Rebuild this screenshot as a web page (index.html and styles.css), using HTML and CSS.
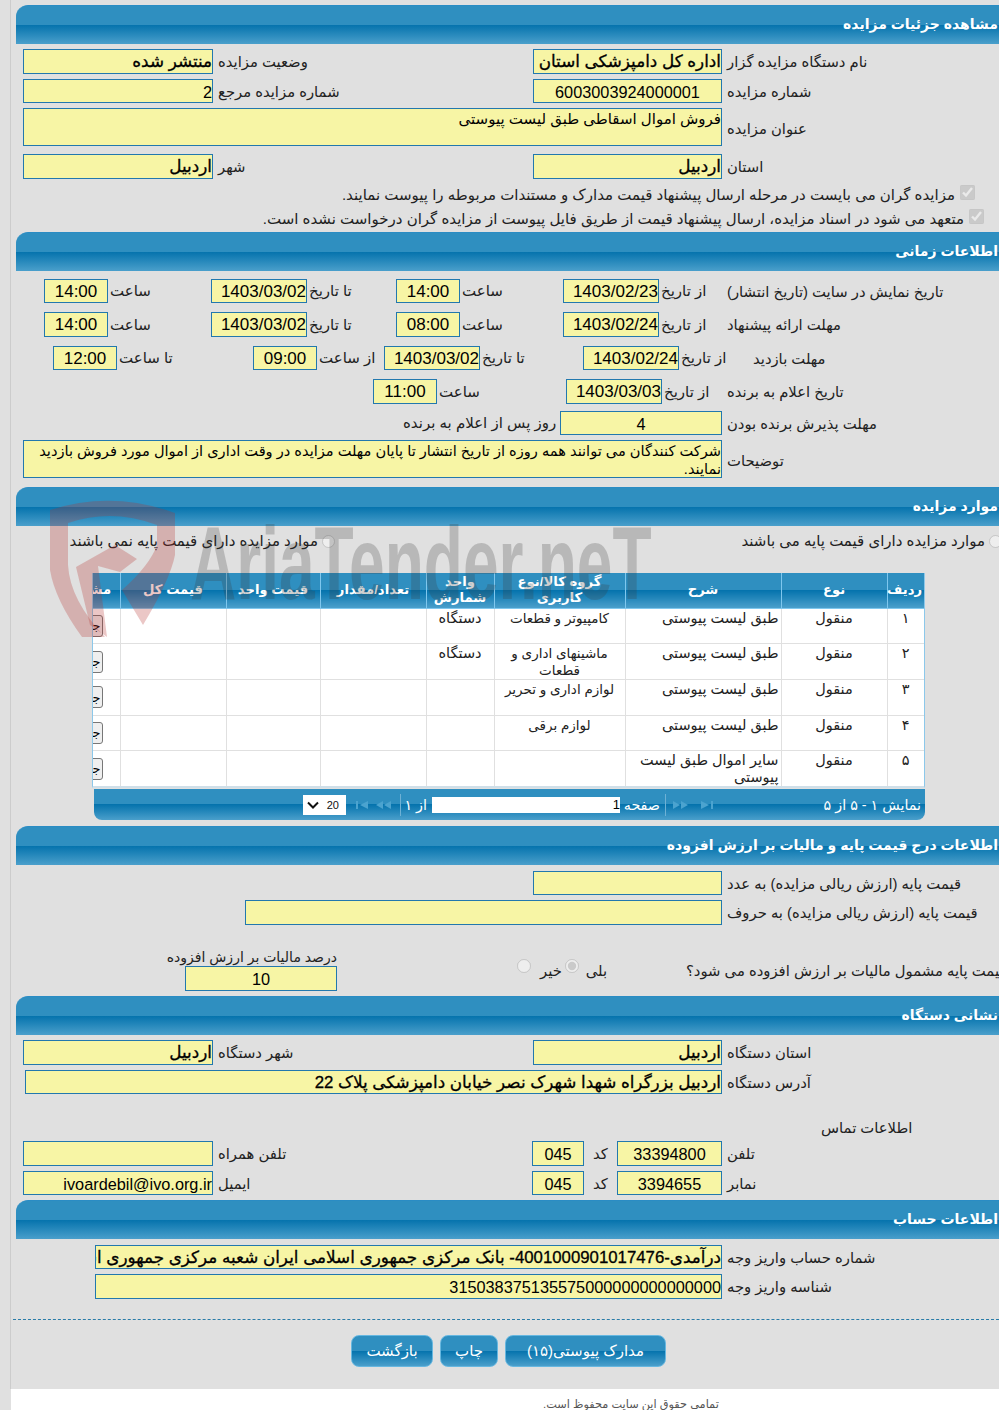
FILE: index.html
```html
<!DOCTYPE html>
<html lang="fa">
<head>
<meta charset="utf-8">
<title>مشاهده جزئیات مزایده</title>
<link rel="stylesheet" href="styles.css">
</head>
<body>
<div class="page">
  <section class="sec">
    <h2 class="head"><span>مشاهده جزئیات مزایده</span></h2>
    <div class="form f1">
      <div class="row h25">
        <div class="in w190 m7 bold">منتشر شده</div><label class="lb w315">وضعیت مزایده</label>
        <div class="in w189 bold">اداره کل دامپزشکی استان</div><label class="lb">نام دستگاه مزایده گزار</label>
      </div>
      <div class="row h24 gap5">
        <div class="in w190 m7">2</div><label class="lb w315">شماره مزایده مرجع</label>
        <div class="in w189 center">6003003924000001</div><label class="lb">شماره مزایده</label>
      </div>
      <div class="row h38 gap5">
        <div class="in w699 m7 top">فروش اموال اسقاطی طبق لیست پیوستی</div><label class="lb">عنوان مزایده</label>
      </div>
      <div class="row h25 gap8">
        <div class="in w190 m7 bold">اردبیل</div><label class="lb w315">شهر</label>
        <div class="in w189 bold">اردبیل</div><label class="lb">استان</label>
      </div>
      <label class="check c1"><input type="checkbox" checked disabled>مزایده گران می بایست در مرحله ارسال پیشنهاد قیمت مدارک و مستندات مربوطه را پیوست نمایند.</label>
      <label class="check c2"><input type="checkbox" checked disabled>متعهد می شود در اسناد مزایده، ارسال پیشنهاد قیمت از طریق فایل پیوست از مزایده گران درخواست نشده است.</label>
    </div>
  </section>

  <section class="sec">
    <h2 class="head"><span>اطلاعات زمانی</span></h2>
    <div class="form f2">
      <div class="row tr t-a">
        <div class="in time">14:00</div><label class="tl">ساعت</label>
        <div class="in date">1403/03/02</div><label class="tl">تا تاریخ</label>
        <div class="in time">14:00</div><label class="tl">ساعت</label>
        <div class="in date">1403/02/23</div><label class="tl">از تاریخ</label>
        <label class="lb">تاریخ نمایش در سایت (تاریخ انتشار)</label>
      </div>
      <div class="row tr t-a h25">
        <div class="in time">14:00</div><label class="tl">ساعت</label>
        <div class="in date">1403/03/02</div><label class="tl">تا تاریخ</label>
        <div class="in time">08:00</div><label class="tl">ساعت</label>
        <div class="in date">1403/02/24</div><label class="tl">از تاریخ</label>
        <label class="lb">مهلت ارائه پیشنهاد</label>
      </div>
      <div class="row tr t-b">
        <div class="in time">12:00</div><label class="tl">تا ساعت</label>
        <div class="in time">09:00</div><label class="tl">از ساعت</label>
        <div class="in date">1403/03/02</div><label class="tl">تا تاریخ</label>
        <div class="in date">1403/02/24</div><label class="tl">از تاریخ</label>
        <label class="lb">مهلت بازدید</label>
      </div>
      <div class="row tr t-c h25">
        <div class="in time">11:00</div><label class="tl">ساعت</label>
        <div class="in date">1403/03/03</div><label class="tl">از تاریخ</label>
        <label class="lb">تاریخ اعلام به برنده</label>
      </div>
      <div class="row tr t-d">
        <label class="tl">روز پس از اعلام به برنده</label>
        <div class="in center">4</div>
        <label class="lb">مهلت پذیرش برنده بودن</label>
      </div>
      <div class="row h38 gap5">
        <div class="in w699 m7 top desc">شرکت کنندگان می توانند همه روزه از تاریخ انتشار تا پایان مهلت مزایده در وقت اداری از اموال مورد فروش بازدید نمایند.</div><label class="lb">توضیحات</label>
      </div>
    </div>
  </section>

  <section class="sec items">
    <h2 class="head"><span>موارد مزایده</span></h2>
    <div class="radios">
      <label class="rad"><input type="radio" disabled>موارد مزایده دارای قیمت پایه می باشند</label>
      <label class="rad r2"><input type="radio" disabled>موارد مزایده دارای قیمت پایه نمی باشند</label>
    </div>
    <div class="grid">
      <table>
        <colgroup>
          <col class="c-no"><col class="c-type"><col class="c-desc"><col class="c-group"><col class="c-unit"><col class="c-qty"><col class="c-price"><col class="c-total"><col class="c-act">
        </colgroup>
        <thead>
          <tr><th>ردیف</th><th>نوع</th><th>شرح</th><th>گروه کالا/نوع کاربری</th><th>واحد شمارش</th><th>تعداد/مقدار</th><th>قیمت واحد</th><th>قیمت کل</th><th>مشخصات</th></tr>
        </thead>
        <tbody>
          <tr><td>١</td><td>منقول</td><td class="r">طبق لیست پیوستی</td><td class="g">کامپیوتر و قطعات</td><td>دستگاه</td><td></td><td></td><td></td><td class="act"><button type="button" tabindex="-1">جزئیات</button></td></tr>
          <tr><td>٢</td><td>منقول</td><td class="r">طبق لیست پیوستی</td><td class="g">ماشینهای اداری و قطعات</td><td>دستگاه</td><td></td><td></td><td></td><td class="act"><button type="button" tabindex="-1">جزئیات</button></td></tr>
          <tr><td>٣</td><td>منقول</td><td class="r">طبق لیست پیوستی</td><td class="g">لوازم اداری و تحریر</td><td></td><td></td><td></td><td></td><td class="act"><button type="button" tabindex="-1">جزئیات</button></td></tr>
          <tr><td>۴</td><td>منقول</td><td class="r">طبق لیست پیوستی</td><td class="g">لوازم برقی</td><td></td><td></td><td></td><td></td><td class="act"><button type="button" tabindex="-1">جزئیات</button></td></tr>
          <tr><td>۵</td><td>منقول</td><td class="r">سایر اموال طبق لیست پیوستی</td><td class="g"></td><td></td><td></td><td></td><td></td><td class="act"><button type="button" tabindex="-1">جزئیات</button></td></tr>
        </tbody>
      </table>
    </div>
    <div class="pager">
      <span class="p-info">نمایش ١ - ۵ از ۵</span>
      <svg class="pi n1" viewBox="0 0 12 8"><path d="M0 0v8l8-4zM10 0h2v8h-2z"/></svg>
      <svg class="pi wide n2" viewBox="0 0 16 8"><path d="M0 0v8l7-4zM8 0v8l7-4z"/></svg>
      <i class="sep"></i>
      <span class="p-lbl">صفحه</span>
      <span class="p-input">1</span>
      <span class="p-of">از ١</span>
      <i class="sep"></i>
      <svg class="pi wide n3" viewBox="0 0 16 8"><path d="M8 0v8L1 4zM16 0v8L9 4z"/></svg>
      <svg class="pi n4" viewBox="0 0 12 8"><path d="M0 0h2v8H0zM12 0v8L4 4z"/></svg>
      <span class="p-size">20<svg viewBox="0 0 12 8"><path d="M1 1.500l5 5 5-5" fill="none" stroke="#111" stroke-width="2"/></svg></span>
    </div>
    <div class="mark" aria-hidden="true">
      <svg class="shield" viewBox="40 495 140 145"><path d="M50 510Q112 490 175 513V555Q170 580 143 625L122 590Q150 565 157 545V525Q112 508 68 523V565Q70 600 105 637H82Q55 600 50 570Z" fill="#b5302c" opacity=".27"/><path d="M76 567 115 545 137 559 120 572 98 566 107 637 90 625Z" fill="#b5302c" opacity=".27"/></svg>
      <span class="m-text">AriaTender.neT</span>
    </div>
  </section>

  <section class="sec">
    <h2 class="head"><span>اطلاعات درج قیمت پایه و مالیات بر ارزش افزوده</span></h2>
    <div class="form f4">
      <div class="row h24">
        <div class="in w189 m510"></div><label class="lb">قیمت پایه (ارزش ریالی مزایده) به عدد</label>
      </div>
      <div class="row h25 gap5">
        <div class="in w477 m222"></div><label class="lb">قیمت پایه (ارزش ریالی مزایده) به حروف</label>
      </div>
      <div class="vat">
        <div class="vat-rate">
          <label>درصد مالیات بر ارزش افزوده</label>
          <div class="in center">10</div>
        </div>
        <div class="vat-radio">
          <label class="rad"><input type="radio" disabled>خیر</label>
          <label class="rad"><input type="radio" checked disabled>بلی</label>
        </div>
        <label class="vat-q">آیا قیمت پایه مشمول مالیات بر ارزش افزوده می شود؟</label>
      </div>
    </div>
  </section>

  <section class="sec">
    <h2 class="head"><span>نشانی دستگاه</span></h2>
    <div class="form f5">
      <div class="row h25">
        <div class="in w190 m7 bold">اردبیل</div><label class="lb w315">شهر دستگاه</label>
        <div class="in w189 bold">اردبیل</div><label class="lb">استان دستگاه</label>
      </div>
      <div class="row h24 gap5">
        <div class="in w697 m9 bold">اردبیل بزرگراه شهدا شهرک نصر خیابان دامپزشکی پلاک 22</div><label class="lb">آدرس دستگاه</label>
      </div>
      <div class="contact">اطلاعات تماس</div>
      <div class="row h25">
        <div class="in w190 m7"></div><label class="lb w314">تلفن همراه</label>
        <div class="in w52 center">045</div><label class="code">کد</label>
        <div class="in w105 center">33394800</div><label class="lb">تلفن</label>
      </div>
      <div class="row h24 gap5">
        <div class="in w190 m7">ivoardebil@ivo.org.ir</div><label class="lb w314">ایمیل</label>
        <div class="in w52 center">045</div><label class="code">کد</label>
        <div class="in w105 center">3394655</div><label class="lb">نمابر</label>
      </div>
    </div>
  </section>

  <section class="sec">
    <h2 class="head"><span>اطلاعات حساب</span></h2>
    <div class="form f6">
      <div class="row h24">
        <div class="in w627 m79 bold clip">درآمدی-4001000901017476- بانک مرکزی جمهوری اسلامی ایران شعبه مرکزی جمهوری اسلامی ایران</div><label class="lb">شماره حساب واریز وجه</label>
      </div>
      <div class="row h25 gap5">
        <div class="in w627 m79">315038375135575000000000000000</div><label class="lb">شناسه واریز وجه</label>
      </div>
    </div>
  </section>

  <div class="actions">
    <button type="button" class="btn b1">بازگشت</button>
    <button type="button" class="btn b2">چاپ</button>
    <button type="button" class="btn b3">مدارک پیوستی(١۵)</button>
  </div>
</div>
<footer class="foot">تمامی حقوق این سایت محفوظ است.</footer>
</body>
</html>
```
FILE: styles.css
```css
* { box-sizing: border-box; }
html, body { margin: 0; padding: 0; height: 1410px; overflow: hidden; }
body {
  width: 999px;
  background: #e0e0e0;
  color: #222;
  font: 14.800px "Liberation Sans", "DejaVu Sans", sans-serif;
  position: relative;
}
.page {
  width: 989px;
  height: 1389px;
  margin-left: 10px;
  padding-top: 5px;
  border-left: 1px solid #ccc;
  padding-left: 5px;
  overflow: hidden;
}
.sec { width: 1000px; position: relative; }
.head {
  margin: 0;
  height: 39px;
  background: linear-gradient(#2f8fc0 0, #2f8fc0 49%, #0573ad 50%, #4a9fcb 100%);
  border-top: 1px solid #2a8cc4;
  border-radius: 12px 0 0 0;
  direction: rtl;
  padding: 0 18px 0 0;
  color: #fff;
  font-size: 14px;
  font-weight: bold;
  line-height: 36px;
}
.form { direction: ltr; }
.row { display: flex; align-items: center; }
.h24 { height: 24px; }
.h25 { height: 25px; }
.h38 { height: 38px; }
.h38 .lb { padding-top: 3px; }
.gap5 { margin-top: 5px; }
.gap8 { margin-top: 8px; }
.in {
  height: 100%;
  border: 1px solid #2278ae;
  background: #f7f5a5;
  color: #000;
  direction: rtl;
  text-align: right;
  font-size: 16.300px;
  line-height: 24px;
  white-space: nowrap;
  overflow: hidden;
  flex: none;
}
.center { text-align: center; }
.bold { font-size: 16.800px; -webkit-text-stroke: .3px #000; }
.top { line-height: 20px; white-space: normal; font-size: 15px; }
.w52 { width: 52px; }
.w105 { width: 105px; }
.w189 { width: 189px; }
.w190 { width: 190px; }
.w477 { width: 477px; }
.w627 { width: 627px; }
.w697 { width: 697px; }
.w699 { width: 699px; }
.m7 { margin-left: 7px; }
.m9 { margin-left: 9px; }
.m79 { margin-left: 79px; }
.m222 { margin-left: 229px; }
.m510 { margin-left: 517px; }
.lb { margin-left: 5px; direction: rtl; text-align: left; font-size: 14.800px; white-space: nowrap; flex: none; }
.w314 { width: 314px; }
.w315 { width: 315px; }
.f1 { padding-top: 5px; height: 188px; }
.check { display: flex; direction: rtl; align-items: flex-start; font-size: 15px; height: 24px; line-height: 24px; white-space: nowrap; width: 984px; }
.check input { margin: 2px 0 0 5px; width: 15px; height: 15px; flex: none; accent-color: #ccc; }
.c1 { margin-top: 4px; padding-right: 25px; }
.c2 { padding-right: 16px; }
.f2 { padding-top: 8px; height: 216px; }
.tr { position: relative; height: 24px; margin-bottom: 9px; }
.tr.h25 { height: 25px; }
.time { width: 64px; text-align: center; font-size: 17px; }
.date { width: 96px; font-size: 17px; }
.tl { direction: rtl; text-align: left; font-size: 15px; white-space: nowrap; padding-left: 2px; flex: none; }
.tr .lb { position: absolute; left: 711px; margin: 0; }
.t-a { padding-left: 28px; }
.t-a .time:nth-of-type(1) + .tl { width: 103px; }
.t-a .date:nth-of-type(2) + .tl { width: 89px; }
.t-a .time:nth-of-type(3) + .tl { width: 103px; }
.t-b { padding-left: 37px; }
.t-b .time:nth-of-type(1) + .tl { width: 136px; }
.t-b .time:nth-of-type(2) + .tl { width: 67px; }
.t-b .date:nth-of-type(3) + .tl { width: 103px; }
.tr.t-b .lb { left: 737px; }
.t-c { padding-left: 357px; }
.t-c .time:nth-of-type(1) + .tl { width: 129px; }
.tr.t-d { margin-bottom: 5px; margin-top: -2px; padding-left: 387px; }
.t-d .tl { width: 157px; padding-left: 0; }
.t-d .in { width: 162px; }
.desc { font-size: 14.600px; line-height: 18px; padding: 1px 0 0 10px; }
.items { height: 339px; }
.radios { direction: rtl; height: 47px; }
.rad { display: inline-flex; align-items: center; white-space: nowrap; font-size: 15px; }
.rad input { margin: 0 0 0 4px; width: 13px; height: 13px; flex: none; }
.radios .rad { position: absolute; top: 45px; right: 14px; }
.radios .r2 { right: 681px; }
.grid { width: 833px; margin-left: 76px; border: 1px solid #8cc8ea; border-top: 0; border-bottom: 2px solid #cfdfe9; overflow: hidden; height: 215px; direction: rtl; background: #fff; }
table { border-collapse: collapse; table-layout: fixed; width: 884px; direction: rtl; }
.c-no { width: 37px; } .c-type { width: 106px; } .c-desc { width: 156px; } .c-group { width: 131px; }
.c-unit { width: 68px; } .c-qty { width: 106px; } .c-price { width: 94px; } .c-total { width: 106px; } .c-act { width: 80px; }
th {
  height: 35px;
  padding: 0 2px;
  background: linear-gradient(#2f8fc0 0, #2f8fc0 49%, #0573ad 50%, #4a9fcb 100%);
  border-left: 1px solid #7fc7ee;
  border-bottom: 1px solid #7fc7ee;
  color: #fff;
  font-size: 13.200px;
  line-height: 16px;
  font-weight: bold;
  text-align: center;
}
td {
  height: 35.500px;
  padding: 1px 2px 0;
  border: 1px solid #e0e0e0;
  border-top: 0;
  border-right: 0;
  vertical-align: top;
  text-align: center;
  color: #222;
  font-size: 14.500px;
  line-height: 17px;
}
td.r { text-align: right; }
td.g { font-size: 13.500px; }
td.act { vertical-align: middle; padding: 0 17px 0 0; border-left: 0; }
td button { display: block; width: 60px; height: 22px; padding: 0 1px; overflow: hidden; text-align: right; background: #efefef; border: 1px solid #777; border-radius: 3px; font: 13px "Liberation Sans", "DejaVu Sans", sans-serif; }
.pager {
  width: 831px;
  height: 31px;
  margin: 1px 0 0 78px;
  border-radius: 0 0 8px 8px;
  background: linear-gradient(#2f8fc0 0, #2f8fc0 49%, #0573ad 50%, #4a9fcb 100%);
  display: flex;
  direction: rtl;
  align-items: center;
  color: #fff;
  font-size: 14.300px;
  padding-right: 4px;
}
.p-info { width: 208px; flex: none; }
.pi { width: 12px; height: 8px; fill: #4ba3cf; flex: none; }
.pi.wide { width: 16px; }
.n2 { margin-right: 12px; }
.sep { width: 1px; height: 22px; background: #6eb1d5; margin-right: 7px; flex: none; }
.p-lbl { margin-right: 5px; width: 35px; flex: none; white-space: nowrap; }
.p-input { width: 188px; height: 16px; margin-right: 5px; background: #fff; color: #000; font-size: 13px; line-height: 16px; text-align: right; flex: none; }
.p-of { margin-right: 5px; width: 20px; flex: none; white-space: nowrap; }
.p-of + .sep { margin-right: 6px; }
.n3 { margin-right: 9px; }
.n4 { margin-right: 7px; }
.p-size { width: 43px; height: 20px; margin-right: 10px; background: #fff; color: #111; font-size: 11px; display: flex; align-items: center; justify-content: space-between; padding: 0 7px 0 4px; flex: none; }
.p-size svg { width: 12px; height: 8px; }
.mark { position: absolute; left: 24px; top: 8px; width: 640px; height: 145px; pointer-events: none; }
.shield { position: absolute; left: 0; top: 0; width: 140px; height: 145px; }
.m-text { position: absolute; left: 150px; top: 16px; color: rgba(60,60,60,.24); font: bold 104px/104px "Liberation Sans", sans-serif; white-space: nowrap; transform: scaleX(.616); transform-origin: left top; }
.f4 { padding-top: 6px; height: 131px; }
.vat { position: relative; height: 71px; }
.vat-rate { position: absolute; left: 153px; top: 24px; width: 168px; direction: rtl; }
.vat-rate label { display: block; text-align: right; font-size: 14px; line-height: 17px; white-space: nowrap; }
.vat-rate .in { height: 25px; width: 152px; }
.vat-radio { position: absolute; left: 501px; top: 37px; display: flex; gap: 3px; direction: ltr; }
.vat-radio input { margin: -10px 9px 0 0; width: 14px; height: 14px; }
.vat-radio label { font-size: 14.800px; }
.vat-radio label + label input { margin-right: 7px; }
.vat-q { position: absolute; left: 670px; top: 38px; direction: rtl; font-size: 14.800px; white-space: nowrap; line-height: 17px; width: 340px; text-align: left; overflow: hidden; }
.f5 { padding-top: 5px; height: 165px; }
.contact { direction: rtl; text-align: left; padding: 26px 0 0 805px; font-size: 14.800px; height: 47px; line-height: 17px; }
.code { margin-left: 0; width: 33px; direction: rtl; font-size: 14.800px; text-align: center; flex: none; }
.f6 { padding-top: 6px; height: 80px; }
.actions {
  width: 986px;
  margin-left: -3px;
  padding-top: 15px;
  border-top: 1px dashed #2a7ca8;
  display: flex;
  gap: 7px;
  padding-left: 338px;
}
.btn {
  height: 32px;
  padding: 0;
  border: 1px solid #66b7e0;
  border-radius: 8px;
  background: linear-gradient(#2f8fc0 0, #2f8fc0 49%, #0573ad 50%, #4a9fcb 100%);
  color: #fff;
  font: 15px "Liberation Sans", "DejaVu Sans", sans-serif;
}
.b1 { width: 82px; }
.b2 { width: 58px; }
.b3 { width: 161px; }
.foot {
  position: absolute;
  left: 11px;
  right: 0;
  top: 1389px;
  height: 21px;
  background: #fff;
  padding: 9px 0 0 532px;
  direction: rtl;
  text-align: left;
  color: #555;
  font-size: 11.300px;
}
```
